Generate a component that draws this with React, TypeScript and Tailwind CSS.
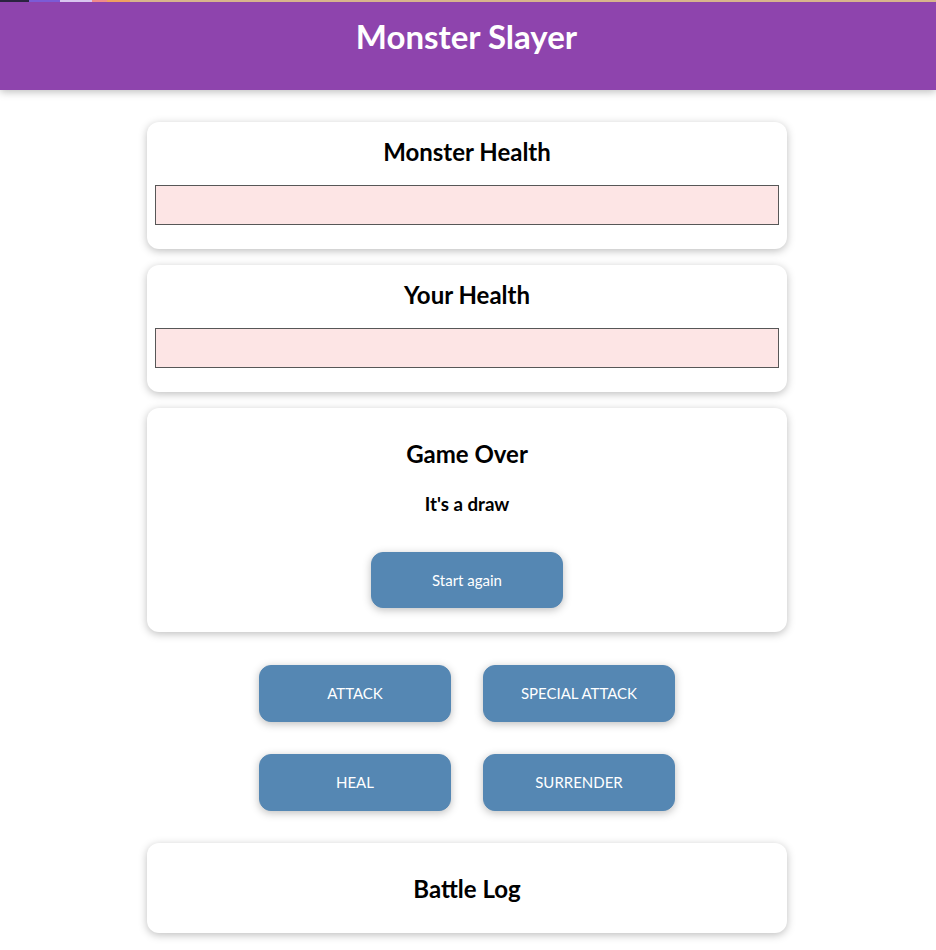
import { useState } from "react";

const Healthbar = ({ value }: { value: number }) => {
  return (
    <div className="mt-4 mb-4 h-10 w-full border border-[#575757] bg-[#fde5e5]">
      <div className="h-full bg-[#00a876]" style={{ width: `${value}%` }} />
    </div>
  );
};

const ActionButton = ({ label }: { label: string }) => {
  return (
    <button className="m-4 h-[57px] w-48 cursor-pointer rounded-xl border border-[#5587b3] bg-[#5587b3] text-[15px] text-white shadow-[0_2px_8px_rgba(0,0,0,0.26)]">
      {label}
    </button>
  );
};

const App = () => {
  const [monsterHealth] = useState(0);
  const [playerHealth] = useState(0);

  return (
    <div className="min-h-[950px] bg-white font-['Lato',sans-serif] text-black">
      {/* thin strip along the very top of the shot */}
      <div className="flex h-[2px]">
        <div className="w-[29px] bg-[#2a2340]" />
        <div className="w-[31px] bg-[#7b5bd6]" />
        <div className="w-[32px] bg-[#d9c6f0]" />
        <div className="w-[15px] bg-[#f08a8a]" />
        <div className="w-[23px] bg-[#f0a060]" />
        <div className="flex-1 bg-[#d8b48c]" />
      </div>
      <header className="flex h-[88px] items-center justify-center bg-[#8e44ad] pr-[3px] text-white shadow-[0_2px_8px_rgba(0,0,0,0.26)]">
        <h1 className="-mt-[18px] text-[33px] font-bold">Monster Slayer</h1>
      </header>

      <div className="pr-[2px]">
        <div className="mx-auto mt-8 w-[640px]">
          <section className="rounded-xl p-2 text-center shadow-[0_2px_8px_rgba(0,0,0,0.26)]">
            <h2 className="mt-1 h-[35px] text-[24px] leading-[35px] font-bold">Monster Health</h2>
            <Healthbar value={monsterHealth} />
          </section>

          <section className="mt-4 rounded-xl p-2 text-center shadow-[0_2px_8px_rgba(0,0,0,0.26)]">
            <h2 className="mt-1 h-[35px] text-[24px] leading-[35px] font-bold">Your Health</h2>
            <Healthbar value={playerHealth} />
          </section>

          <section className="mt-4 rounded-xl px-2 pt-[28px] pb-2 text-center shadow-[0_2px_8px_rgba(0,0,0,0.26)]">
            <h2 className="h-[35px] text-[24px] leading-[35px] font-bold">Game Over</h2>
            <h3 className="mt-5 h-[26px] text-[18.72px] leading-[26px] font-bold">It's a draw</h3>
            <div className="mt-[19px] flex justify-center">
              <button className="m-4 h-14 w-48 cursor-pointer rounded-xl border border-[#5587b3] bg-[#5587b3] text-[15px] text-white shadow-[0_2px_8px_rgba(0,0,0,0.26)]">
                Start again
              </button>
            </div>
          </section>

          <section className="mt-[17px] flex flex-wrap justify-center px-[80px]">
            <ActionButton label="ATTACK" />
            <ActionButton label="SPECIAL ATTACK" />
            <ActionButton label="HEAL" />
            <ActionButton label="SURRENDER" />
          </section>

          <section className="mt-4 rounded-xl px-2 pt-[28px] pb-[27px] text-center shadow-[0_2px_8px_rgba(0,0,0,0.26)]">
            <h2 className="h-[35px] text-[24px] leading-[35px] font-bold">Battle Log</h2>
            <ul className="m-0 list-none p-0"></ul>
          </section>
        </div>
      </div>
    </div>
  );
};

export default App;
